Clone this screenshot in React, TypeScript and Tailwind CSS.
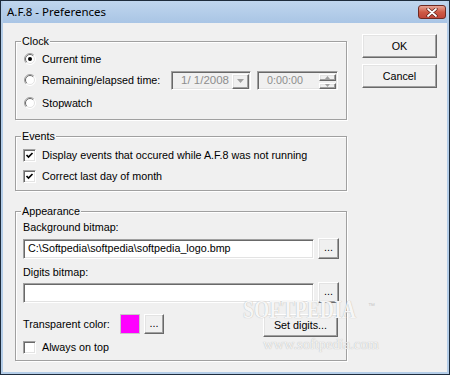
import React from "react";

function Radio({ checked }: { checked?: boolean }) {
  return (
    <svg width="12" height="12" viewBox="0 0 12 12" className="shrink-0">
      <circle cx="6" cy="6" r="5.5" fill="#ffffff" />
      <path d="M2.1 9.9 A5.5 5.5 0 0 1 9.9 2.1" stroke="#a0a0a0" fill="none" />
      <path d="M9.9 2.1 A5.5 5.5 0 0 1 2.1 9.9" stroke="#ffffff" fill="none" />
      <path d="M2.8 9.2 A4.5 4.5 0 0 1 9.2 2.8" stroke="#696969" fill="none" />
      <path d="M9.2 2.8 A4.5 4.5 0 0 1 2.8 9.2" stroke="#e3e3e3" fill="none" />
      {checked && <circle cx="6" cy="6" r="2" fill="#000" />}
    </svg>
  );
}

function Check({ checked }: { checked?: boolean }) {
  return (
    <div className="w-[13px] h-[13px] shrink-0 bg-white border border-t-[#a0a0a0] border-l-[#a0a0a0] border-b-white border-r-white shadow-[inset_1px_1px_0_#696969,inset_-1px_-1px_0_#e3e3e3] flex items-center justify-center">
      {checked && (
        <svg width="9" height="9" viewBox="0 0 9 9">
          <path d="M1.5 4 L3.5 6 L7.5 2" stroke="#000" strokeWidth="1.7" fill="none" />
        </svg>
      )}
    </div>
  );
}

function Btn({ children, className }: { children: React.ReactNode; className?: string }) {
  return (
    <div
      className={
        "flex items-center justify-center bg-[#f0f0f0] border border-t-white border-l-white border-b-[#696969] border-r-[#696969] shadow-[inset_-1px_-1px_0_#a0a0a0,inset_1px_1px_0_#e3e3e3] text-black " +
        (className ?? "")
      }
    >
      {children}
    </div>
  );
}

function Group({
  label,
  className,
  children,
}: {
  label: string;
  className?: string;
  children: React.ReactNode;
}) {
  return (
    <div
      className={
        "relative border border-[#a0a0a0] shadow-[inset_1px_1px_0_#fff,1px_1px_0_#fff] " + (className ?? "")
      }
    >
      <span className="absolute -top-[7px] left-[5px] px-[1px] bg-[#f0f0f0] leading-[13px]">{label}</span>
      {children}
    </div>
  );
}

const sunken =
  "border border-t-[#a0a0a0] border-l-[#a0a0a0] border-b-white border-r-white shadow-[inset_1px_1px_0_#696969,inset_-1px_-1px_0_#e3e3e3]";

export default function App() {
  return (
    <div className="w-[450px] h-[375px] bg-[#b4cde8] border border-[#1e2c3c] flex flex-col px-[2px] pb-[2px] font-['Liberation_Sans',Arial,sans-serif] overflow-hidden">
      {/* Title bar */}
      <div className="h-[22px] shrink-0 flex items-center justify-between pl-[4px] pr-[1px] bg-linear-to-b from-[#c0d6ee] to-[#a9c5e5]">
        <span className="text-[11.5px] text-black leading-none font-['Noto_Sans',sans-serif]">A.F.8 - Preferences</span>
        <div className="w-[28px] h-[14px] rounded-[3px] border border-[#6e2a22] bg-linear-to-b from-[#e6a597] via-[#cf5a45] to-[#c0463a] flex items-center justify-center">
          <svg width="12" height="9" viewBox="0 0 12 9">
            <path d="M2 1 L10 8 M10 1 L2 8" stroke="#5a1c14" strokeWidth="3.2" strokeLinecap="round" />
            <path d="M2 1 L10 8 M10 1 L2 8" stroke="#ffffff" strokeWidth="1.8" strokeLinecap="round" />
          </svg>
        </div>
      </div>

      {/* Client */}
      <div className="relative flex-1 bg-[#f0f0f0] flex text-[10.75px] text-black leading-[13px]">
        {/* Left column */}
        <div className="ml-[12px] w-[332px] flex flex-col">
          <Group label="Clock" className="mt-[18px] h-[79px] pt-[7px]">
            <div className="h-[20px] flex items-center pl-[8px] gap-[6px]">
              <Radio checked />
              <span>Current time</span>
            </div>
            <div className="mt-[1px] h-[20px] flex items-center pl-[8px]">
              <Radio />
              <span className="ml-[6px] w-[129px]">Remaining/elapsed time:</span>
              <div className={"w-[80px] h-[19px] bg-[#f0f0f0] flex items-center overflow-hidden relative " + sunken}>
                <span className="pl-[9px] text-[#8d8d8d] whitespace-nowrap text-[11.5px]">1/ 1/2008</span>
                <Btn className="absolute right-[1px] top-[2px] w-[17px] h-[15px]">
                  <svg width="7" height="4" viewBox="0 0 7 4">
                    <path d="M0 0 H7 L3.5 4 Z" fill="#a0a0a0" />
                  </svg>
                </Btn>
              </div>
              <div className={"ml-[6px] w-[81px] h-[19px] bg-[#f0f0f0] flex items-center relative " + sunken}>
                <span className="pl-[9px] text-[#8d8d8d]">0:00:00</span>
                <div className="absolute right-[1px] top-[2px] w-[17px] flex flex-col gap-[2px]">
                  <Btn className="h-[7px] w-[17px]">
                    <svg width="5" height="3" viewBox="0 0 5 3">
                      <path d="M0 3 H5 L2.5 0 Z" fill="#a0a0a0" />
                    </svg>
                  </Btn>
                  <Btn className="h-[6px] w-[17px]">
                    <svg width="5" height="3" viewBox="0 0 5 3">
                      <path d="M0 0 H5 L2.5 3 Z" fill="#a0a0a0" />
                    </svg>
                  </Btn>
                </div>
              </div>
            </div>
            <div className="mt-[3px] h-[20px] flex items-center pl-[8px] gap-[6px]">
              <Radio />
              <span>Stopwatch</span>
            </div>
          </Group>

          <Group label="Events" className="mt-[16px] h-[55px] pt-[8px]">
            <div className="h-[20px] flex items-center pl-[7px] gap-[6px]">
              <Check checked />
              <span>Display events that occured while A.F.8 was not running</span>
            </div>
            <div className="mt-[1px] h-[20px] flex items-center pl-[7px] gap-[6px]">
              <Check checked />
              <span>Correct last day of month</span>
            </div>
          </Group>

          <Group label="Appearance" className="mt-[20px] h-[150px] pt-[9px] pl-[7px]">
            <div>Background bitmap:</div>
            <div className="mt-[4px] flex items-center gap-[4px]">
              <div className={"w-[291px] h-[20px] bg-white flex items-center pl-[4px] " + sunken}>
                C:\Softpedia\softpedia\softpedia_logo.bmp
              </div>
              <Btn className="w-[21px] h-[21px] pb-[2px]">...</Btn>
            </div>
            <div className="mt-[7px]">Digits bitmap:</div>
            <div className="mt-[3px] flex items-center gap-[4px]">
              <div className={"w-[291px] h-[20px] bg-white " + sunken}></div>
              <Btn className="w-[21px] h-[21px] pb-[2px]">...</Btn>
            </div>
            <div className="mt-[11px] h-[23px] flex items-start">
              <span className="leading-[20px] w-[97px]">Transparent color:</span>
              <div className="w-[20px] h-[20px] bg-[#ff00ff] border border-[#c8c8c8]"></div>
              <Btn className="ml-[4px] w-[20px] h-[20px] pb-[2px]">...</Btn>
              <Btn className="ml-[99px] w-[75px] h-[23px]">Set digits...</Btn>
            </div>
            <div className="mt-[4px] h-[13px] flex items-center gap-[6px]">
              <Check />
              <span>Always on top</span>
            </div>
          </Group>
        </div>

        {/* Right column */}
        <div className="ml-[15px] mt-[11px] flex flex-col gap-[6px]">
          <Btn className="w-[75px] h-[24px]">OK</Btn>
          <Btn className="w-[75px] h-[24px]">Cancel</Btn>
        </div>

        {/* Watermark */}
        <div className="pointer-events-none absolute left-[240px] top-[274px] flex items-start">
          <span className="origin-left scale-x-[0.76] font-['Liberation_Serif',serif] font-bold text-[26px] leading-[26px] text-[#f6f6f6] [text-shadow:0_0_1px_#a8a8a8] whitespace-nowrap">
            SOFTPEDIA
          </span>
        </div>
        <span className="pointer-events-none absolute left-[365px] top-[279px] text-[7px] leading-[7px] text-[#c8c8c8]">™</span>
        <span className="pointer-events-none absolute left-[260px] top-[314px] font-['Liberation_Serif',serif] text-[14.5px] leading-[15px] text-[#f4f4f4] [text-shadow:0_0_1px_#a8a8a8] whitespace-nowrap">
          www.softpedia.com
        </span>
      </div>
    </div>
  );
}
